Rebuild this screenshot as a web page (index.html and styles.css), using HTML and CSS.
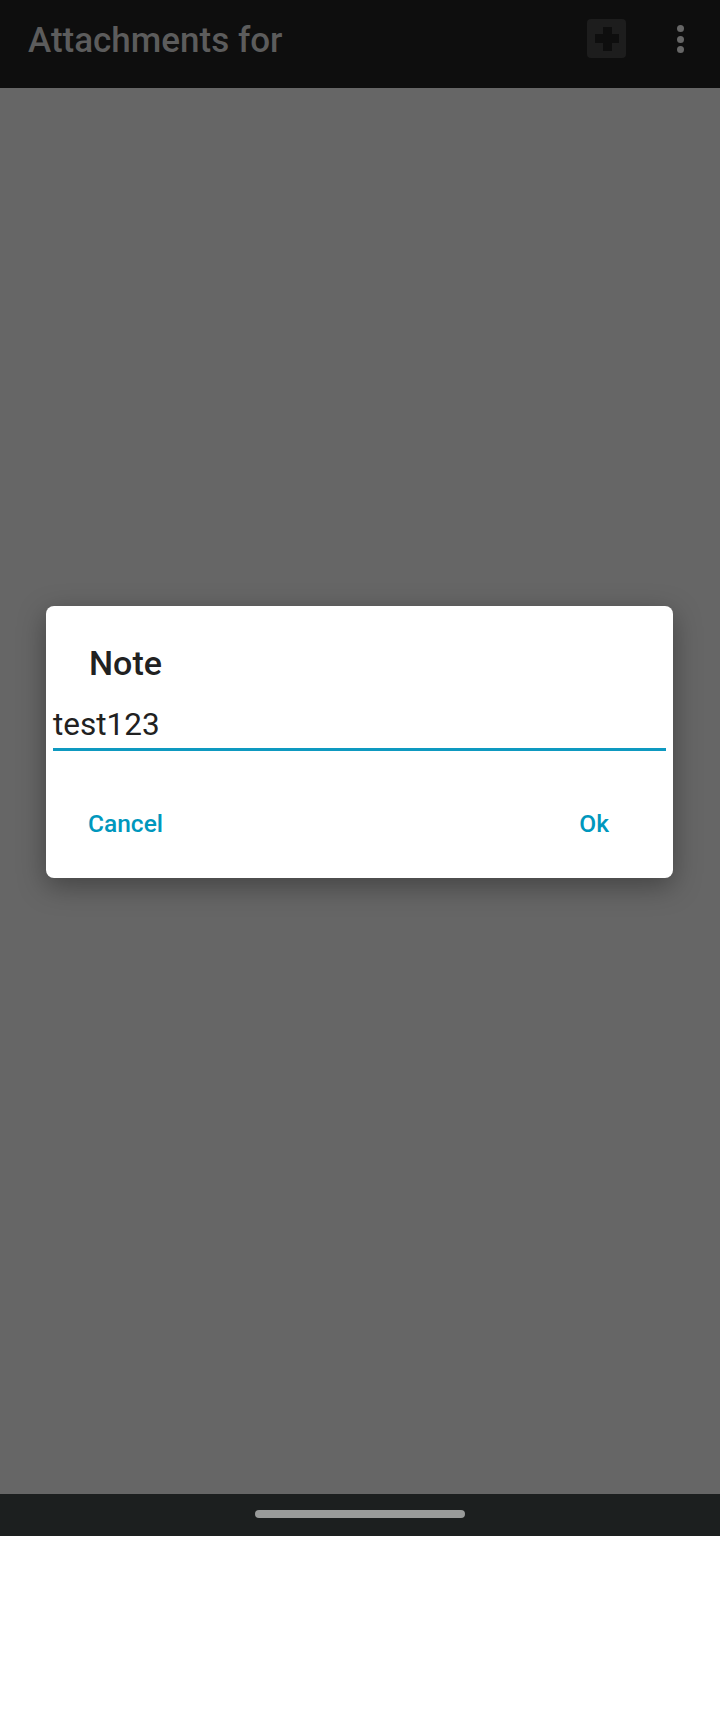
FILE: index.html
```html
<!DOCTYPE html>
<html lang="en">
<head>
    <meta charset="UTF-8">
    <meta name="viewport" content="width=device-width, initial-scale=1.0">
    <title>Attachments</title>
    <link rel="stylesheet" href="styles.css">
</head>
<body>
    <div id="screen">
        <div id="toolbar">
            <div class="toolbar-title">Attachments for</div>
            <div class="toolbar-actions">
                <div class="add-button">
                    <svg width="24" height="24" viewBox="0 0 24 24">
                        <rect x="8" y="0" width="9" height="24" fill="#0e0e0e"/>
                        <rect x="0" y="7" width="25" height="9" fill="#0e0e0e"/>
                    </svg>
                </div>
                <div class="overflow-button">
                    <span class="dot"></span>
                    <span class="dot"></span>
                    <span class="dot"></span>
                </div>
            </div>
        </div>

        <div id="scrim">
            <div class="dialog">
                <div class="dialog-title">Note</div>
                <div class="dialog-input">test123</div>
                <div class="dialog-buttons">
                    <button class="dialog-button">Cancel</button>
                    <button class="dialog-button">Ok</button>
                </div>
            </div>
        </div>

        <div id="navbar">
            <div class="nav-handle"></div>
        </div>
    </div>
</body>
</html>
```

FILE: styles.css
```css
body {
    margin: 0;
    font-family: 'Roboto', 'Noto Sans', sans-serif;
    background-color: #fff;
}

#screen {
    width: 720px;
    display: flex;
    flex-direction: column;
}

#toolbar {
    height: 88px;
    background-color: #0e0e0e;
    display: flex;
    justify-content: space-between;
    box-sizing: border-box;
}

.toolbar-title {
    padding: 20px 0 0 28px;
    font-size: 35px;
    line-height: 41px;
    font-weight: 500;
    color: #5c5c5c;
}

.toolbar-actions {
    display: flex;
    align-items: flex-start;
    padding: 19px 36px 0 0;
}

.add-button {
    width: 39px;
    height: 39px;
    border-radius: 4px;
    background-color: #1d1d1d;
    display: flex;
    justify-content: center;
    align-items: center;
}

.overflow-button {
    margin: 6px 0 0 51px;
    display: flex;
    flex-direction: column;
    gap: 3.5px;
}

.dot {
    width: 7px;
    height: 7px;
    border-radius: 50%;
    background-color: #666;
}

#scrim {
    height: 1406px;
    background-color: #666;
    padding: 518px 47px 0 46px;
    box-sizing: border-box;
}

.dialog {
    background-color: #fff;
    border-radius: 8px;
    padding: 37px 7px 40px 7px;
    box-shadow: 0 8px 28px rgba(0, 0, 0, 0.35);
}

.dialog-title {
    padding-left: 36px;
    font-size: 34px;
    line-height: 40px;
    font-weight: 500;
    color: #212121;
}

.dialog-input {
    margin-top: 23px;
    font-size: 31.5px;
    line-height: 37px;
    color: #212121;
    padding-bottom: 5px;
    border-bottom: 3px solid #0e99c0;
}

.dialog-buttons {
    margin-top: 58px;
    display: flex;
    justify-content: space-between;
    padding: 0 57px 0 35px;
}

.dialog-button {
    font-family: 'Roboto', 'Noto Sans', sans-serif;
    font-size: 24.5px;
    line-height: 29px;
    font-weight: 500;
    color: #0097bd;
    background: none;
    border: none;
    padding: 0;
}

#navbar {
    height: 42px;
    background-color: #1c1f1f;
    display: flex;
    justify-content: center;
    align-items: flex-start;
}

.nav-handle {
    margin-top: 16px;
    width: 210px;
    height: 8px;
    border-radius: 4px;
    background-color: #999b9a;
}
```
